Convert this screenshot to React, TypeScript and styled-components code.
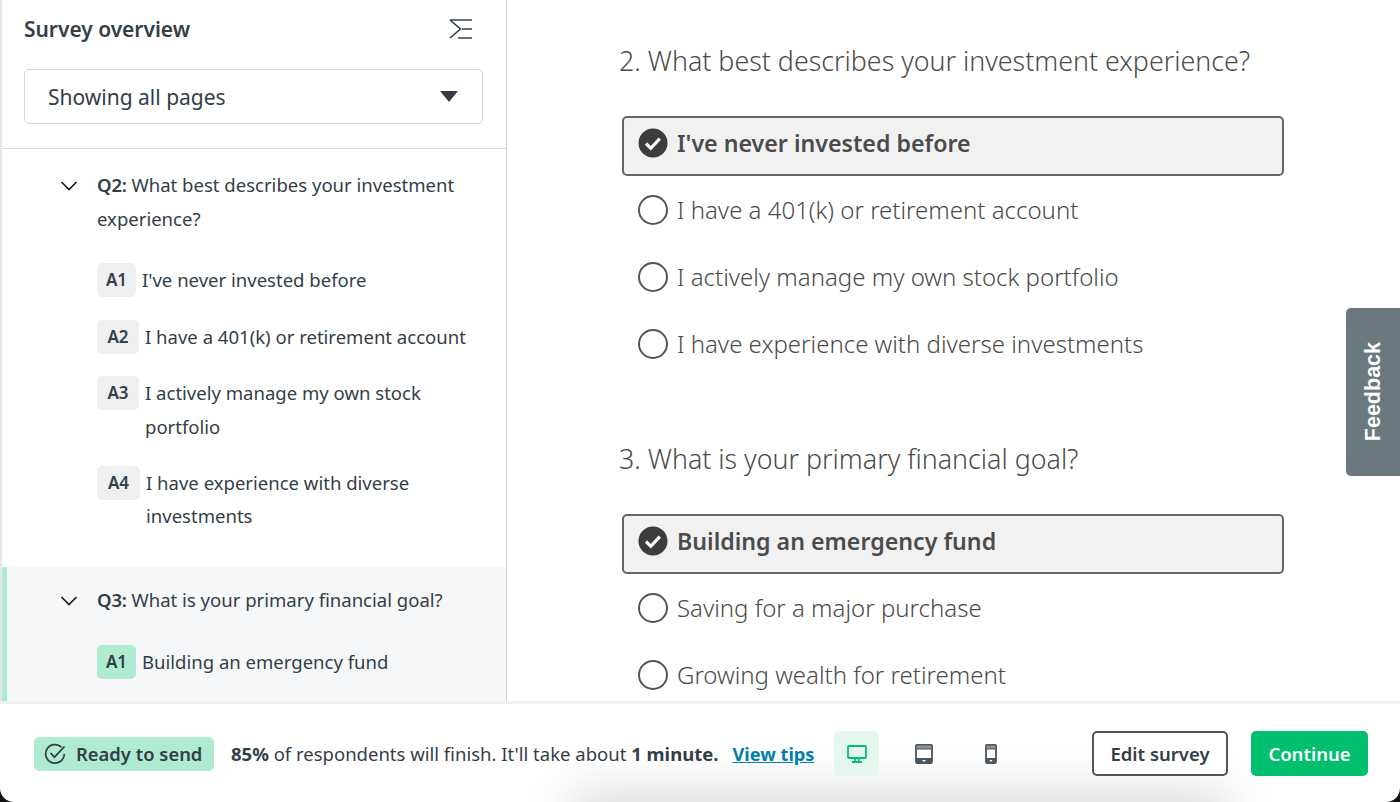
import React from 'react'
import styled, { createGlobalStyle } from 'styled-components'

const GlobalStyle = createGlobalStyle`
  html, body {
    margin: 0;
    padding: 0;
    background: #111;
  }

  body {
    font-family: 'Noto Sans', 'Open Sans', sans-serif;
    color: #333e48;
  }
`

const Page = styled.div`
  width: 1400px;
  height: 802px;
  display: flex;
  flex-direction: column;
  background: #fff;
  border-radius: 0 0 14px 14px;
  overflow: hidden;
  position: relative;
`

const Workspace = styled.div`
  flex: 1;
  min-height: 0;
  display: flex;
  border-bottom: 3px solid #eeeff0;
`

const Sidebar = styled.aside`
  width: 507px;
  flex-shrink: 0;
  box-sizing: border-box;
  border-left: 2px solid #e4e6e7;
  border-right: 1px solid #d0d2d3;
  display: flex;
  flex-direction: column;
  overflow: hidden;
`

const SidebarHead = styled.div`
  height: 149px;
  flex-shrink: 0;
  box-sizing: border-box;
  padding: 13px 22px 0;
  border-bottom: 1px solid #d9dbdc;
`

const TitleRow = styled.div`
  display: flex;
  align-items: center;
  justify-content: space-between;
  height: 32px;
  margin-bottom: 24px;
  padding-right: 11px;
`

const SidebarTitle = styled.h2`
  margin: 0;
  font-size: 20.95px;
  font-weight: 600;
  color: #333e48;
`

const Select = styled.div`
  width: 459px;
  height: 55px;
  box-sizing: border-box;
  border: 1.5px solid #d3d5d6;
  border-radius: 5px;
  display: flex;
  align-items: center;
  justify-content: space-between;
  padding: 0 24px 0 23px;
  font-size: 21px;
  color: #333e48;
`

const Caret = styled.span`
  width: 0;
  height: 0;
  border-left: 9px solid transparent;
  border-right: 9px solid transparent;
  border-top: 11px solid #333e48;
`

const QuestionBlock = styled.section<{ $active?: boolean }>`
  flex: ${(p) => (p.$active ? 1 : 'none')};
  box-sizing: border-box;
  padding: ${(p) => (p.$active ? '16px 20px 0 53px' : '19px 20px 34px 53px')};
  background: ${(p) => (p.$active ? '#f6f7f9' : 'transparent')};
  border-left: 5px solid ${(p) => (p.$active ? '#aeebd0' : 'transparent')};
`

const QuestionRow = styled.div`
  display: flex;
  gap: 19px;
  font-size: 18.55px;
  line-height: 33.5px;
  color: #333e48;

  b {
    font-weight: 600;
    letter-spacing: -0.2px;
  }
`

const Chevron = styled.svg`
  width: 18px;
  height: 33px;
  flex-shrink: 0;
  margin-top: 2px;
`

const QuestionText = styled.div`
  flex: 1;
`

const AnswerList = styled.div<{ $top: number }>`
  display: flex;
  flex-direction: column;
  gap: 22.5px;
  margin: ${(p) => p.$top}px 0 0 37px;
`

const AnswerRow = styled.div`
  display: flex;
  align-items: flex-start;
  font-size: 18.55px;
  line-height: 33.5px;
  color: #333e48;
`

const AnswerBadge = styled.span<{ $active?: boolean; $width: number }>`
  flex-shrink: 0;
  width: ${(p) => p.$width}px;
  height: 34px;
  margin-right: 6px;
  border-radius: 5px;
  display: flex;
  align-items: center;
  justify-content: center;
  font-size: 17px;
  font-weight: 600;
  background: ${(p) => (p.$active ? '#aeebd0' : '#eeeff0')};
`

const Main = styled.main`
  flex: 1;
  min-width: 0;
  overflow: hidden;
  box-sizing: border-box;
  padding: 41px 0 0 112px;
  color: #4b4b4b;
`

const SurveyQuestion = styled.section`
  height: 398px;
`

const QuestionHeading = styled.h3`
  margin: 0 0 35px;
  font-size: 26.8px;
  line-height: 40px;
  font-weight: 300;
  color: #4b4b4b;
`

const OptionList = styled.div`
  width: 662px;
  margin-left: 3px;
`

const Option = styled.div<{ $selected?: boolean }>`
  box-sizing: border-box;
  display: flex;
  align-items: center;
  gap: 9px;
  height: ${(p) => (p.$selected ? '60px' : '67px')};
  margin-bottom: ${(p) => (p.$selected ? '0.4px' : '0')};
  padding: ${(p) => (p.$selected ? '0 14px 6px' : '0 16px')};
  font-size: ${(p) => (p.$selected ? '23.2px' : '24px')};
  font-weight: ${(p) => (p.$selected ? 600 : 300)};
  color: #4b4b4b;
  background: ${(p) => (p.$selected ? '#f1f1f1' : 'transparent')};
  border: ${(p) => (p.$selected ? '2px solid #666' : 'none')};
  border-radius: 5px;
`

const Radio = styled.span`
  width: 30px;
  height: 30px;
  flex-shrink: 0;
  box-sizing: border-box;
  border: 2px solid #555;
  border-radius: 50%;
`

const Tick = styled.svg`
  width: 30px;
  height: 30px;
  flex-shrink: 0;
`

const FeedbackTab = styled.div`
  position: absolute;
  top: 308px;
  right: 0;
  width: 54px;
  height: 168px;
  background: #6b787f;
  border-radius: 5px 0 0 5px;
  display: flex;
  align-items: center;
  justify-content: center;
  color: #fff;
  font-family: 'Liberation Sans', Arial, sans-serif;
  font-size: 21.5px;
  font-weight: 700;

  span {
    writing-mode: vertical-rl;
    transform: rotate(180deg);
  }
`

const Footer = styled.footer`
  height: 98px;
  flex-shrink: 0;
  box-sizing: border-box;
  display: flex;
  align-items: center;
  padding: 1px 32px 0 34px;
  position: relative;
  overflow: hidden;

  > * {
    position: relative;
  }
`

const BottomGlow = styled.div`
  && {
    position: absolute;
  }
  left: 580px;
  width: 640px;
  bottom: -34px;
  height: 34px;
  border-radius: 30px;
  box-shadow: 0 0 44px 16px rgba(0, 0, 0, 0.12);
`

const ReadyBadge = styled.div`
  display: flex;
  align-items: center;
  gap: 10px;
  height: 34px;
  width: 180px;
  box-sizing: border-box;
  padding-left: 10px;
  background: #aeebd0;
  border-radius: 5px;
  font-size: 18.4px;
  font-weight: 600;
  white-space: nowrap;
`

const Summary = styled.p`
  margin: 0 0 0 17px;
  font-size: 18.5px;
  white-space: nowrap;

  b {
    font-weight: 700;
  }
`

const TipsLink = styled.a`
  margin-left: 14px;
  font-size: 18.2px;
  font-weight: 700;
  color: #007faa;
  text-decoration: underline;
  white-space: nowrap;
`

const DeviceGroup = styled.div`
  display: flex;
  gap: 22px;
  margin-left: 20px;
`

const DeviceButton = styled.div<{ $active?: boolean }>`
  width: 45px;
  height: 45px;
  border-radius: 5px;
  display: flex;
  align-items: center;
  justify-content: center;
  background: ${(p) => (p.$active ? '#e4f6ee' : 'transparent')};
`

const Actions = styled.div`
  display: flex;
  gap: 23px;
  margin-left: auto;
`

const Button = styled.button<{ $primary?: boolean }>`
  height: 45px;
  box-sizing: border-box;
  width: ${(p) => (p.$primary ? '117px' : '136px')};
  border-radius: 5px;
  font-family: inherit;
  font-size: 18.5px;
  font-weight: 600;
  padding: 0;
  color: ${(p) => (p.$primary ? '#fff' : '#333e48')};
  background: ${(p) => (p.$primary ? '#00bf6f' : '#fff')};
  border: ${(p) => (p.$primary ? 'none' : '2px solid #4c565e')};
`

const ChevronDown = () => (
  <Chevron viewBox="0 0 18 33" fill="none" stroke="#1a1a1a" strokeWidth="1.7">
    <path d="M1.5 12l7.5 7.5 7.5-7.5" />
  </Chevron>
)

const CheckedMark = () => (
  <Tick viewBox="0 0 30 30">
    <circle cx="15" cy="15" r="14.5" fill="#3c3c3c" />
    <path d="M8 15.5l4.8 4.8 9-9.6" fill="none" stroke="#fff" strokeWidth="3.2" />
  </Tick>
)

const answers = [
  { id: 'A1', width: 39, text: "I've never invested before" },
  { id: 'A2', width: 42, text: 'I have a 401(k) or retirement account' },
  { id: 'A3', width: 42, text: 'I actively manage my own stock portfolio' },
  { id: 'A4', width: 43, text: 'I have experience with diverse investments' }
]

const goals = [
  'Building an emergency fund',
  'Saving for a major purchase',
  'Growing wealth for retirement'
]

const App = () => (
  <>
    <GlobalStyle />
    <Page>
      <Workspace>
        <Sidebar>
          <SidebarHead>
            <TitleRow>
              <SidebarTitle>Survey overview</SidebarTitle>
              <svg width="24" height="22" viewBox="0 0 24 22" fill="none" stroke="#333e48" strokeWidth="1.6">
                <path d="M1 2L11.5 11 1 20M1 2h22M13 11h10M9 20h14" />
              </svg>
            </TitleRow>
            <Select>
              Showing all pages
              <Caret />
            </Select>
          </SidebarHead>
          <QuestionBlock>
            <QuestionRow>
              <ChevronDown />
              <QuestionText>
                <b>Q2:</b> What best describes your investment experience?
              </QuestionText>
            </QuestionRow>
            <AnswerList $top={28}>
              {answers.map((a) => (
                <AnswerRow key={a.id}>
                  <AnswerBadge $width={a.width}>{a.id}</AnswerBadge>
                  <span>{a.text}</span>
                </AnswerRow>
              ))}
            </AnswerList>
          </QuestionBlock>
          <QuestionBlock $active>
            <QuestionRow>
              <ChevronDown />
              <QuestionText>
                <b>Q3:</b> What is your primary financial goal?
              </QuestionText>
            </QuestionRow>
            <AnswerList $top={27}>
              <AnswerRow>
                <AnswerBadge $active $width={39}>A1</AnswerBadge>
                <span>Building an emergency fund</span>
              </AnswerRow>
            </AnswerList>
          </QuestionBlock>
        </Sidebar>
        <Main>
          <SurveyQuestion>
            <QuestionHeading>2. What best describes your investment experience?</QuestionHeading>
            <OptionList>
              {answers.map((a, i) => (
                <Option key={a.id} $selected={i === 0}>
                  {i === 0 ? <CheckedMark /> : <Radio />}
                  <span>{a.text}</span>
                </Option>
              ))}
            </OptionList>
          </SurveyQuestion>
          <SurveyQuestion>
            <QuestionHeading>3. What is your primary financial goal?</QuestionHeading>
            <OptionList>
              {goals.map((g, i) => (
                <Option key={g} $selected={i === 0}>
                  {i === 0 ? <CheckedMark /> : <Radio />}
                  <span>{g}</span>
                </Option>
              ))}
            </OptionList>
          </SurveyQuestion>
        </Main>
      </Workspace>
      <Footer>
        <BottomGlow />
        <ReadyBadge>
          <svg width="22" height="22" viewBox="0 0 22 22" fill="none" stroke="#333e48" strokeWidth="1.7">
            <path d="M17.5 4.2A9.3 9.3 0 1 0 20.3 11" />
            <path d="M6.5 10l4 4.2L20.5 3.5" />
          </svg>
          Ready to send
        </ReadyBadge>
        <Summary>
          <b>85%</b> of respondents will finish. It'll take about <b>1 minute.</b>
        </Summary>
        <TipsLink>View tips</TipsLink>
        <DeviceGroup>
          <DeviceButton $active>
            <svg width="20" height="18" viewBox="0 0 20 18" fill="none" stroke="#00bf6f" strokeWidth="1.8">
              <rect x="1" y="1" width="18" height="12" rx="1" />
              <path d="M5 17h10M8 13.5V17M12 13.5V17" />
            </svg>
          </DeviceButton>
          <DeviceButton>
            <svg width="18" height="20" viewBox="0 0 18 20">
              <rect x="1" y="1" width="16" height="18" rx="1.2" fill="#fff" stroke="#4c565e" strokeWidth="1.8" />
              <rect x="1" y="1" width="16" height="4" fill="#8a9298" stroke="#4c565e" strokeWidth="1" />
              <rect x="1" y="14" width="16" height="5" rx="0.8" fill="#4c565e" />
              <rect x="7.5" y="16" width="3" height="1.4" fill="#fff" />
            </svg>
          </DeviceButton>
          <DeviceButton>
            <svg width="12" height="20" viewBox="0 0 12 20">
              <rect x="1" y="1" width="10" height="18" rx="1.2" fill="#fff" stroke="#4c565e" strokeWidth="1.8" />
              <rect x="1" y="1" width="10" height="4" fill="#8a9298" stroke="#4c565e" strokeWidth="1" />
              <rect x="1" y="14" width="10" height="5" rx="0.8" fill="#4c565e" />
              <rect x="4.8" y="16" width="2.4" height="1.4" fill="#fff" />
            </svg>
          </DeviceButton>
        </DeviceGroup>
        <Actions>
          <Button>Edit survey</Button>
          <Button $primary>Continue</Button>
        </Actions>
      </Footer>
      <FeedbackTab>
        <span>Feedback</span>
      </FeedbackTab>
    </Page>
  </>
)

export default App
